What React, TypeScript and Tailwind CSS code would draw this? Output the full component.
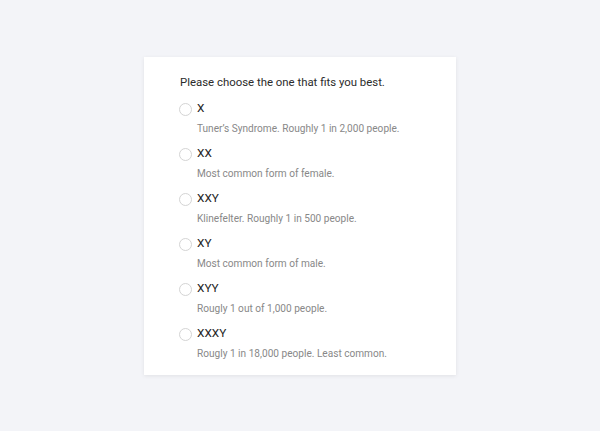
import React, { useState } from 'react';

const options = [
  { value: 'X', description: 'Tuner’s Syndrome. Roughly 1 in 2,000 people.' },
  { value: 'XX', description: 'Most common form of female.' },
  { value: 'XXY', description: 'Klinefelter. Roughly 1 in 500 people.' },
  { value: 'XY', description: 'Most common form of male.' },
  { value: 'XYY', description: 'Rougly 1 out of 1,000 people.' },
  { value: 'XXXY', description: 'Rougly 1 in 18,000 people. Least common.' },
];

export default function App() {
  const [selected, setSelected] = useState<string | null>(null);

  return (
    <div
      className="flex h-[431px] w-[600px] items-start justify-center bg-[#f3f4f8] pt-[57px]"
      style={{ fontFamily: 'Roboto, "Noto Sans", sans-serif' }}
    >
      <div className="w-[312px] bg-white px-[35px] pb-[13px] pt-[15px] shadow-[0_1px_4px_rgba(0,0,0,0.08)]">
        <p className="pl-px text-[11.4px] leading-5 text-[#2b2b2b]">Please choose the one that fits you best.</p>
        <div className="mt-[8px] flex flex-col gap-[8px]">
          {options.map(option => (
            <label key={option.value} className="flex cursor-pointer flex-col">
              <div className="flex h-[18px] items-center gap-[5px]">
                <span
                  className={
                    selected === option.value
                      ? 'h-[13px] w-[13px] rounded-full border-4 border-[#2b2b2b] bg-white'
                      : 'h-[13px] w-[13px] rounded-full border border-[#d4d4d4] bg-white'
                  }
                />
                <input
                  type="radio"
                  name="chromosome"
                  className="hidden"
                  checked={selected === option.value}
                  onChange={() => setSelected(option.value)}
                />
                <span className="text-[11.8px] text-[#222]">{option.value}</span>
              </div>
              <span className="mt-[3px] pl-[18px] text-[10.1px] leading-4 text-[#888]">
                {option.description}
              </span>
            </label>
          ))}
        </div>
      </div>
    </div>
  );
}
